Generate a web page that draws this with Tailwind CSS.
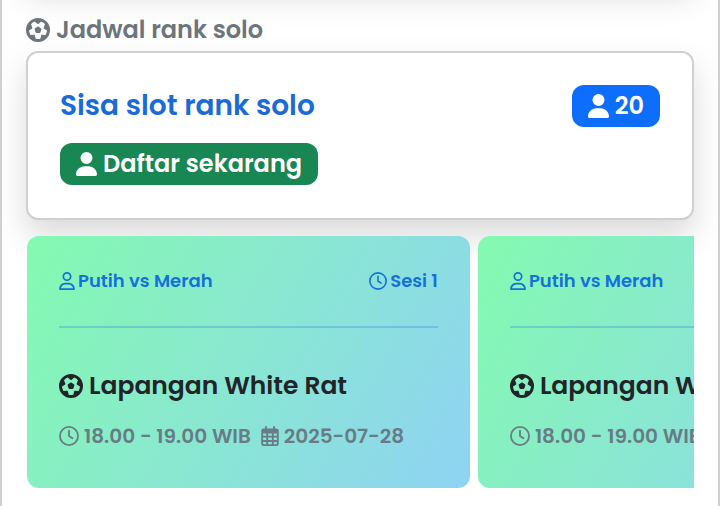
<!DOCTYPE html>
<html lang="id">
<head>
<meta charset="utf-8">
<meta name="viewport" content="width=device-width, initial-scale=1">
<title>Jadwal rank solo</title>
<script src="https://cdn.jsdelivr.net/npm/@tailwindcss/browser@4"></script>
</head>
<body class="bg-white font-['Poppins','Inter',sans-serif] font-semibold text-[#212529]">
<svg class="hidden" aria-hidden="true">
  <symbol id="ball" viewBox="0 0 512 512"><path d="M417.3 360.1l-71.6-4.8c-5.2-.3-10.3 1.1-14.5 4.2s-7.2 7.4-8.4 12.5l-17.6 69.6C289.5 445.8 273 448 256 448s-33.5-2.2-49.2-6.4L189.2 372c-1.3-5-4.3-9.4-8.4-12.5s-9.3-4.5-14.5-4.2l-71.6 4.8c-17.6-27.2-28.5-59.2-30.4-93.6L125 228.3c4.4-2.8 7.6-7 9.2-11.9s1.4-10.2-.5-15l-26.7-66.6C128 109.2 155.3 89 186.7 76.9l55.2 46c4 3.3 9 5.1 14.1 5.1s10.2-1.8 14.1-5.1l55.2-46c31.3 12.1 58.7 32.3 79.6 57.9l-26.7 66.6c-1.9 4.8-2.1 10.1-.5 15s4.9 9.1 9.2 11.9l60.7 38.2c-1.9 34.4-12.8 66.4-30.4 93.6zM256 512A256 256 0 1 0 256 0a256 256 0 1 0 0 512zm14.1-325.7c-8.4-6.1-19.8-6.1-28.2 0L194 221c-8.4 6.1-11.9 16.9-8.7 26.8l18.3 56.3c3.2 9.9 12.4 16.6 22.8 16.6h59.2c10.4 0 19.6-6.7 22.8-16.6l18.3-56.3c3.2-9.9-.3-20.7-8.7-26.8l-47.9-34.8z"/></symbol>
  <symbol id="user" viewBox="0 0 448 512"><path d="M224 256a128 128 0 1 0 0-256 128 128 0 1 0 0 256zm-45.7 48C79.8 304 0 383.8 0 482.3 0 498.7 13.3 512 29.7 512h388.6c16.4 0 29.7-13.3 29.7-29.7C448 383.8 368.2 304 269.7 304z"/></symbol>
  <symbol id="user-line" viewBox="0 0 448 512"><path d="M304 128a80 80 0 1 0-160 0 80 80 0 1 0 160 0zm-208 0a128 128 0 1 1 256 0 128 128 0 1 1-256 0zM49.3 464h349.5c-8.900-63.300-63.300-112-129-112h-91.400c-65.700 0-120.100 48.700-129 112zM0 482.300C0 383.800 79.800 304 178.300 304h91.400C368.200 304 448 383.800 448 482.300c0 16.400-13.300 29.700-29.700 29.700H29.700C13.300 512 0 498.700 0 482.300z"/></symbol>
  <symbol id="clock" viewBox="0 0 512 512"><path fill="none" stroke="currentColor" stroke-width="46" stroke-linecap="round" stroke-linejoin="round" d="M256 24a232 232 0 1 0 0 464 232 232 0 1 0 0-464zM256 120v136l88 60"/></symbol>
  <symbol id="calendar" viewBox="0 0 448 512"><path fill-rule="evenodd" d="M120 0a24 24 0 0 1 24 24v40h160V24a24 24 0 0 1 48 0v40h32a64 64 0 0 1 64 64v320a64 64 0 0 1-64 64H64a64 64 0 0 1-64-64V128a64 64 0 0 1 64-64h32V24a24 24 0 0 1 24-24zM48 192v56h80v-56zm128 0v56h96v-56zm144 0v56h80v-56zM48 296v64h80v-64zm128 0v64h96v-64zm144 0v64h80v-64zM48 408v40a16 16 0 0 0 16 16h64v-56zm128 0v56h96v-56zm144 0v56h64a16 16 0 0 0 16-16v-40z"/></symbol>
</svg>
<main class="min-h-screen overflow-hidden border-x-2 border-[#d0d0d0] px-6">
  <div class="-mt-15 h-10 rounded-xl shadow-[0_16px_32px_rgba(0,0,0,0.15)]"></div>
  <h2 class="mt-5 flex h-[51px] items-center gap-[6px] pt-2 text-2xl text-[#6c757d]">
    <svg class="size-6 fill-current" aria-hidden="true"><use href="#ball"/></svg>Jadwal rank solo
  </h2>
  <section class="rounded-xl border-2 border-[#d0d0d0] bg-white px-8 pt-8 pb-[33px] shadow-[0_16px_32px_rgba(0,0,0,0.15)]">
    <div class="flex items-center justify-between">
      <h3 class="text-[28px] leading-10 text-[#1a6ad8]">Sisa slot rank solo</h3>
      <span class="flex h-[42px] items-center gap-[6px] rounded-xl bg-[#0d6efd] px-4 text-2xl text-white">
        <svg class="h-6 w-[21px] fill-current" aria-hidden="true"><use href="#user"/></svg>20
      </span>
    </div>
    <button type="button" class="mt-4 flex h-[42px] items-center gap-[6px] rounded-xl bg-[#198754] px-4 text-2xl text-white">
      <svg class="h-6 w-[21px] fill-current" aria-hidden="true"><use href="#user"/></svg>Daftar sekarang
    </button>
  </section>
  <div class="relative mt-4 flex gap-2 overflow-hidden pl-px">
    <article class="w-[66.4%] shrink-0 rounded-xl bg-[linear-gradient(120deg,#84fab0_0%,#8fd3f4_100%)] px-8 pt-8 pb-9">
      <div class="flex h-[26px] items-center justify-between text-lg text-[#1470dc]">
        <span class="flex items-center gap-[3px]"><svg class="h-[18px] w-4 fill-current" aria-hidden="true"><use href="#user-line"/></svg>Putih vs Merah</span>
        <span class="flex items-center gap-[3px]"><svg class="size-[18px]" aria-hidden="true"><use href="#clock"/></svg>Sesi 1</span>
      </div>
      <hr class="mt-8 border-t-2 border-[#1470dc]/25">
      <h3 class="mt-10 flex h-9 items-center gap-[6px] text-[25px] whitespace-nowrap"><svg class="size-6 fill-current" aria-hidden="true"><use href="#ball"/></svg>Lapangan White Rat</h3>
      <p class="mt-4 flex h-8 items-center gap-[10px] text-xl whitespace-nowrap text-[#677c84]">
        <span class="flex items-center gap-[5px]"><svg class="size-5" aria-hidden="true"><use href="#clock"/></svg>18.00 - 19.00 WIB</span>
        <span class="flex items-center gap-[5px]"><svg class="h-5 w-[18px] fill-current" aria-hidden="true"><use href="#calendar"/></svg>2025-07-28</span>
      </p>
    </article>
    <article class="w-[66.4%] shrink-0 rounded-xl bg-[linear-gradient(120deg,#84fab0_0%,#8fd3f4_100%)] px-8 pt-8 pb-9">
      <div class="flex h-[26px] items-center text-lg text-[#1470dc]">
        <span class="flex items-center gap-[3px]"><svg class="h-[18px] w-4 fill-current" aria-hidden="true"><use href="#user-line"/></svg>Putih vs Merah</span>
      </div>
      <hr class="mt-8 border-t-2 border-[#1470dc]/25">
      <h3 class="mt-10 flex h-9 items-center gap-[6px] text-[25px] whitespace-nowrap"><svg class="size-6 fill-current" aria-hidden="true"><use href="#ball"/></svg>Lapangan White Rat</h3>
      <p class="mt-4 flex h-8 items-center gap-[5px] text-xl whitespace-nowrap text-[#677c84]"><svg class="size-5" aria-hidden="true"><use href="#clock"/></svg>18.00 - 19.00 WIB</p>
    </article>
  </div>
</main>
</body>
</html>
